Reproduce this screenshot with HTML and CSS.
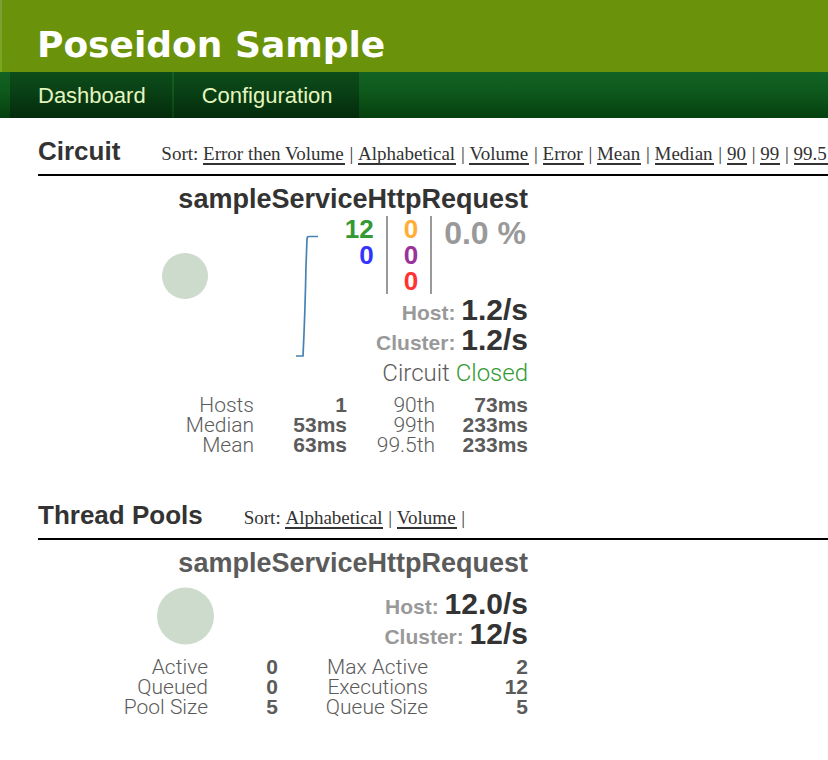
FILE: index.html
```html
<!DOCTYPE html>
<html lang="en">
<head>
<meta charset="utf-8">
<meta name="viewport" content="width=device-width, initial-scale=1">
<title>Poseidon Sample</title>
<link rel="stylesheet" href="styles.css">
</head>
<body>
<header class="banner"><h1>Poseidon Sample</h1></header>
<nav class="menu">
  <a href="#dashboard">Dashboard</a>
  <a href="#configuration">Configuration</a>
</nav>
<main>
  <section class="monitor">
    <div class="monitor-head">
      <h2>Circuit</h2>
      <p class="sort">Sort: <a href="#">Error then Volume</a> | <a href="#">Alphabetical</a> | <a href="#">Volume</a> | <a href="#">Error</a> | <a href="#">Mean</a> | <a href="#">Median</a> | <a href="#">90</a> | <a href="#">99</a> | <a href="#">99.5</a></p>
    </div>
    <article class="card">
      <h3 class="name">sampleServiceHttpRequest</h3>
      <div class="card-body">
        <svg class="chart" width="284" height="179" viewBox="0 0 284 179" aria-hidden="true">
          <circle cx="147" cy="60" r="23" fill="#ccdbcc"/>
          <path d="M258 140H265Q267 100 268 50L269 23Q269 20.500 271 20.500H280" fill="none" stroke="#4682b4" stroke-width="1.700"/>
        </svg>
        <div class="stats">
          <div class="counters">
            <div class="counts"><span class="success">12</span><span class="short">0</span></div>
            <div class="counts"><span class="timeout">0</span><span class="rejected">0</span><span class="failure">0</span></div>
            <div class="percent">0.0 %</div>
          </div>
          <p class="rate"><span>Host: </span>1.2/s</p>
          <p class="rate"><span>Cluster: </span>1.2/s</p>
          <p class="status">Circuit <span class="closed">Closed</span></p>
        </div>
      </div>
      <table class="figures circuit">
        <tr><th>Hosts</th><td>1</td><th>90th</th><td>73ms</td></tr>
        <tr><th>Median</th><td>53ms</td><th>99th</th><td>233ms</td></tr>
        <tr><th>Mean</th><td>63ms</td><th>99.5th</th><td>233ms</td></tr>
      </table>
    </article>
  </section>
  <section class="monitor">
    <div class="monitor-head">
      <h2>Thread Pools</h2>
      <p class="sort">Sort: <a href="#">Alphabetical</a> | <a href="#">Volume</a> |</p>
    </div>
    <article class="card">
      <h3 class="name muted">sampleServiceHttpRequest</h3>
      <div class="card-body">
        <svg class="chart" width="284" height="77" viewBox="0 0 284 77" aria-hidden="true">
          <circle cx="147.500" cy="36" r="28.500" fill="#ccdbcc"/>
        </svg>
        <div class="stats pool-stats">
          <p class="rate"><span>Host: </span>12.0/s</p>
          <p class="rate"><span>Cluster: </span>12/s</p>
        </div>
      </div>
      <table class="figures pool">
        <tr><th>Active</th><td>0</td><th>Max Active</th><td>2</td></tr>
        <tr><th>Queued</th><td>0</td><th>Executions</th><td>12</td></tr>
        <tr><th>Pool Size</th><td>5</td><th>Queue Size</th><td>5</td></tr>
      </table>
    </article>
  </section>
</main>
</body>
</html>
```
FILE: styles.css
```css
* { box-sizing: border-box; }

body {
  margin: 0;
  background: #fff;
  color: #333;
  font-family: "Liberation Sans", Arial, sans-serif;
}

h1, h2, h3, p { margin: 0; }

.banner {
  padding: 24px 37px 6px;
  background: linear-gradient(#7d9d3c, #7aa81c) left / 2px 100% no-repeat #6a930b;
}

.banner h1 {
  color: #fff;
  font: bold 36px/42px "DejaVu Sans", Verdana, sans-serif;
}

.menu {
  display: flex;
  gap: 2px;
  padding-left: 10px;
  background: linear-gradient(#126323, #0f5a1d 40%, #05400f);
}

.menu a {
  padding: 2px 26px 0 28px;
  background: linear-gradient(#0c4d19, #0a4116 40%, #042b0b);
  color: #e4f5bf;
  font-size: 22px;
  line-height: 44px;
  text-decoration: none;
}

main { padding: 16px 0 0 38px; }

.monitor + .monitor { margin-top: 43px; }

.monitor-head {
  display: flex;
  align-items: baseline;
  gap: 41px;
  height: 42px;
  border-bottom: 2px solid #000;
  white-space: nowrap;
}

.monitor-head h2 {
  font-size: 26px;
  line-height: 34px;
}

.sort {
  font: 19px/24px "Liberation Serif", "Times New Roman", serif;
}

.sort a {
  display: inline-block;
  padding-right: 1px;
  border-bottom: 2px solid #333;
  color: #333;
  line-height: 18px;
  text-decoration: none;
}

.card {
  max-width: 490px;
  padding-top: 8px;
}

.name {
  font-size: 27px;
  line-height: 30px;
  padding-bottom: 2px;
  text-align: right;
}

.muted { color: #5b5b5b; }

.card-body { display: flex; }

.chart { flex: none; }

.stats {
  flex: 1;
  text-align: right;
}

.pool-stats { padding-top: 9px; }

.counters {
  display: flex;
  justify-content: flex-end;
  height: 78px;
  margin-bottom: 1px;
}

.counts {
  display: flex;
  flex-direction: column;
  padding: 0 12px 0 16px;
  border-right: 2px solid #999;
  font-size: 26px;
  font-weight: bold;
  line-height: 26px;
}

.percent {
  padding: 0 2px 0 12px;
  color: #999;
  font-size: 32px;
  font-weight: bold;
  line-height: 34px;
  white-space: nowrap;
}

.success { color: #339933; }
.short { color: #3333ff; }
.timeout { color: #ffae33; }
.rejected { color: #993399; }
.failure { color: #ff3333; }

.rate {
  font-size: 30px;
  font-weight: bold;
  line-height: 30px;
  white-space: nowrap;
}

.rate span {
  color: #999;
  font-size: 21px;
  line-height: 20px;
}

.status {
  color: #5b5b5b;
  font-family: Roboto, "Liberation Sans", sans-serif;
  font-size: 24px;
  font-weight: 300;
  line-height: 36px;
}

.status .closed { color: #339933; }

.figures {
  width: 100%;
  border-collapse: collapse;
  table-layout: fixed;
  color: #5b5b5b;
  font-size: 21px;
  line-height: 20px;
  text-align: right;
  white-space: nowrap;
}

.figures th {
  padding: 0;
  font-family: Roboto, "Liberation Sans", sans-serif;
  font-weight: 300;
  text-align: right;
}

.figures td {
  padding: 0;
  font-weight: bold;
}

.circuit td { width: 93px; }
.circuit th:nth-child(3) { width: 88px; }
.pool td:nth-child(2) { width: 70px; }
.pool th:nth-child(3) { width: 150px; }
.pool td:last-child { width: 100px; }
```
